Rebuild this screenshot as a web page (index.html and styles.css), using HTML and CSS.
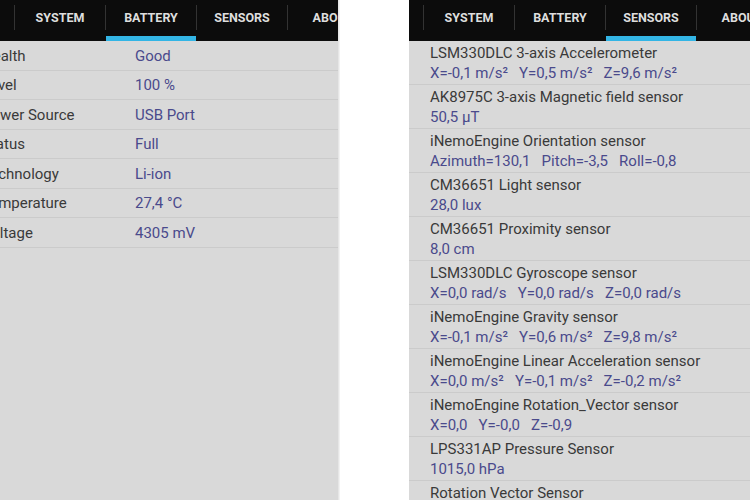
FILE: index.html
```html
<!DOCTYPE html>
<html lang="en">
<head>
    <meta charset="UTF-8">
    <meta name="viewport" content="width=device-width, initial-scale=1.0">
    <title>Device Info</title>
    <link rel="stylesheet" href="styles.css">
</head>
<body>
    <div class="screen screen-battery">
        <div class="tabs">
            <span class="sep"></span>
            <div class="tab"><span class="tab-label">SYSTEM</span></div>
            <span class="sep"></span>
            <div class="tab active"><span class="tab-label">BATTERY</span></div>
            <span class="sep"></span>
            <div class="tab"><span class="tab-label">SENSORS</span></div>
            <span class="sep"></span>
            <div class="tab"><span class="tab-label">ABOUT</span></div>
        </div>
        <div class="list battery-list">
            <div class="pair"><span class="key">Health</span><span class="val">Good</span></div>
            <div class="pair"><span class="key">Level</span><span class="val">100 %</span></div>
            <div class="pair"><span class="key">Power Source</span><span class="val">USB Port</span></div>
            <div class="pair"><span class="key">Status</span><span class="val">Full</span></div>
            <div class="pair"><span class="key">Technology</span><span class="val">Li-ion</span></div>
            <div class="pair"><span class="key">Temperature</span><span class="val">27,4 °C</span></div>
            <div class="pair"><span class="key">Voltage</span><span class="val">4305 mV</span></div>
        </div>
    </div>

    <div class="screen screen-sensors">
        <div class="tabs">
            <span class="sep"></span>
            <div class="tab"><span class="tab-label">SYSTEM</span></div>
            <span class="sep"></span>
            <div class="tab"><span class="tab-label">BATTERY</span></div>
            <span class="sep"></span>
            <div class="tab active"><span class="tab-label">SENSORS</span></div>
            <span class="sep"></span>
            <div class="tab"><span class="tab-label">ABOUT</span></div>
        </div>
        <div class="list sensor-list">
            <div class="sensor">
                <div class="name">LSM330DLC 3-axis Accelerometer</div>
                <div class="reading">X=-0,1 m/s²   Y=0,5 m/s²   Z=9,6 m/s²</div>
            </div>
            <div class="sensor">
                <div class="name">AK8975C 3-axis Magnetic field sensor</div>
                <div class="reading">50,5 μT</div>
            </div>
            <div class="sensor">
                <div class="name">iNemoEngine Orientation sensor</div>
                <div class="reading">Azimuth=130,1   Pitch=-3,5   Roll=-0,8</div>
            </div>
            <div class="sensor">
                <div class="name">CM36651 Light sensor</div>
                <div class="reading">28,0 lux</div>
            </div>
            <div class="sensor">
                <div class="name">CM36651 Proximity sensor</div>
                <div class="reading">8,0 cm</div>
            </div>
            <div class="sensor">
                <div class="name">LSM330DLC Gyroscope sensor</div>
                <div class="reading">X=0,0 rad/s   Y=0,0 rad/s   Z=0,0 rad/s</div>
            </div>
            <div class="sensor">
                <div class="name">iNemoEngine Gravity sensor</div>
                <div class="reading">X=-0,1 m/s²   Y=0,6 m/s²   Z=9,8 m/s²</div>
            </div>
            <div class="sensor">
                <div class="name">iNemoEngine Linear Acceleration sensor</div>
                <div class="reading">X=0,0 m/s²   Y=-0,1 m/s²   Z=-0,2 m/s²</div>
            </div>
            <div class="sensor">
                <div class="name">iNemoEngine Rotation_Vector sensor</div>
                <div class="reading">X=0,0   Y=-0,0   Z=-0,9</div>
            </div>
            <div class="sensor">
                <div class="name">LPS331AP Pressure Sensor</div>
                <div class="reading">1015,0 hPa</div>
            </div>
            <div class="sensor">
                <div class="name">Rotation Vector Sensor</div>
                <div class="reading">X=0,0   Y=-0,0   Z=-0,9</div>
            </div>
        </div>
    </div>
</body>
</html>
```

FILE: styles.css
```css
html, body {
    height: 100%;
}
body {
    margin: 0;
    background-color: #ffffff;
    font-family: Roboto, 'Liberation Sans', sans-serif;
    display: flex;
    gap: 71px;
    overflow: hidden;
}
.screen {
    height: 500px;
    background-color: #d9d9d9;
    overflow: hidden;
    flex-shrink: 0;
}
.screen-battery {
    width: 338px;
    box-shadow: 1px 0 0 #e6e6e6, 2px 0 0 #f2f2f2;
}
.screen-sensors {
    width: 341px;
}

/* tab strip */
.tabs {
    height: 41px;
    background-color: #0c0c0c;
    display: flex;
    padding-left: 14px;
    white-space: nowrap;
}
.sep {
    flex: 0 0 1px;
    height: 25px;
    margin-top: 5px;
    background-color: #333333;
}
.tab {
    flex: 0 0 90px;
    display: flex;
    flex-direction: column;
    align-items: center;
}
.tab-label {
    line-height: 35px;
    font-size: 12.5px;
    font-weight: 700;
    color: #dedede;
}
.tab.active::after {
    content: "";
    margin-top: auto;
    align-self: stretch;
    height: 5px;
    background-color: #33b5e5;
}

/* battery list - the screenshot is cropped, so keys start off-screen */
.pair {
    height: 29.5px;
    padding-top: 1px;
    box-sizing: border-box;
    border-bottom: 1px solid #cbcbcb;
    display: flex;
    align-items: center;
    font-size: 15px;
}
.key {
    width: 153px;
    margin-left: -18px;
    color: #3a3a3a;
    white-space: nowrap;
}
.val {
    color: #4a4a8c;
}

/* sensor list */
.sensor {
    height: 41px;
    padding: 2px 0 0 21px;
    border-bottom: 1px solid #cbcbcb;
    font-size: 15px;
    line-height: 20px;
    white-space: nowrap;
}
.name {
    color: #3a3a3a;
}
.reading {
    color: #4a4a8c;
    white-space: pre;
}
```
